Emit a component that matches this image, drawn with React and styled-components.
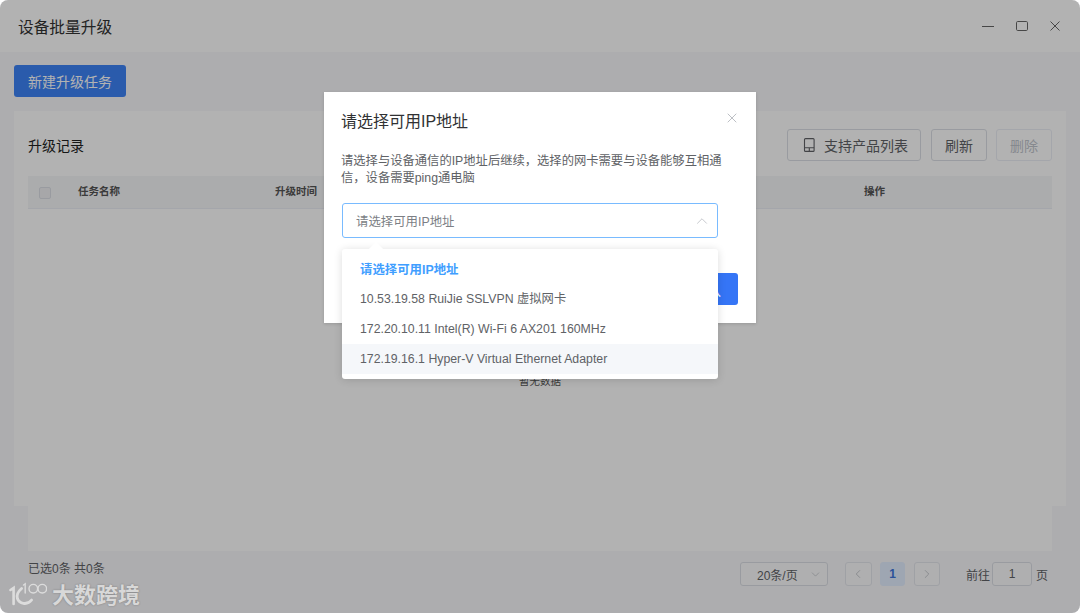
import React from 'react';
import styled, { createGlobalStyle } from 'styled-components';
import { X, ChevronUp, ChevronDown, ChevronLeft, ChevronRight } from 'lucide-react';

const Global = createGlobalStyle`
  html, body { margin: 0; padding: 0; background: #fff; }
  * { box-sizing: border-box; }
  body { font-family: "Liberation Sans", "Noto Sans CJK SC", sans-serif; color: #303133; }
`;

const Win = styled.div`
  position: relative;
  width: 1080px;
  height: 613px;
  overflow: hidden;
  border-radius: 8px;
  background: #f8f8fb;
  display: flex;
  flex-direction: column;
`;
const Header = styled.header`
  height: 52px;
  flex: none;
  background: #fff;
  display: flex;
  align-items: center;
  padding: 0 20px 0 18px;
`;
const WinTitle = styled.div`
  font-size: 15.7px;
  color: #333;
  flex: 1;
`;
const WinControls = styled.div`
  display: flex;
  align-items: center;
  gap: 22px;
  color: #666;
  margin-top: -1px;
`;
const Body = styled.main`
  flex: 1;
  padding: 13px 14px 0;
  display: flex;
  flex-direction: column;
  min-height: 0;
`;
const PrimaryBtn = styled.button`
  align-self: flex-start;
  width: 112px;
  height: 32px;
  border: 0;
  border-radius: 3px;
  background: #3d83f7;
  color: #fff;
  font: inherit;
  font-size: 14px;
  padding: 0;
`;
const Card = styled.section`
  margin-top: 14px;
  height: 395px;
  background: #fff;
  padding: 18px 14px 0;
`;
const Toolbar = styled.div`
  display: flex;
  align-items: center;
  height: 32px;
  gap: 9px;
`;
const CardTitle = styled.div`
  flex: 1;
  font-size: 14px;
  color: #222;
`;
const Btn = styled.button`
  height: 32px;
  width: ${p => p.$w}px;
  border: 1px solid ${p => (p.$disabled ? '#ebeef5' : '#dcdfe6')};
  border-radius: 3px;
  background: #fff;
  color: ${p => (p.$disabled ? '#c0c4cc' : '#606266')};
  font: inherit;
  font-size: 14px;
  padding: 0;
  display: inline-flex;
  align-items: center;
  justify-content: center;
`;
const IconBtn = styled(Btn)`
  justify-content: flex-start;
  padding-left: 15px;
  gap: 8px;
  margin-right: 1px;
`;
const TableArea = styled.div`
  margin-top: 15px;
  height: 375px;
  background: #ffffff;
  position: relative;
`;
const THead = styled.div`
  height: 33px;
  padding-bottom: 3px;
  background: #f5f6f8;
  border-bottom: 1px solid #ebeef5;
  display: grid;
  grid-template-columns: 50px 197px 589px 1fr;
  align-items: center;
  font-size: 10.5px;
  font-weight: 700;
  color: #555;
`;
const Check = styled.span`
  width: 12px;
  height: 12px;
  margin: 5px 0 0 11px;
  border: 1px solid #dcdfe6;
  background: #f0f0f2;
  border-radius: 2px;
  display: block;
`;
const Empty = styled.div`
  position: absolute;
  left: 0;
  right: 0;
  top: 197px;
  text-align: center;
  font-size: 10.5px;
  color: #555;
`;
const Footer = styled.footer`
  display: flex;
  align-items: center;
  height: 24px;
  position: absolute;
  left: 28px;
  right: 28px;
  top: 562px;
  font-size: 12px;
  color: #606266;
`;
const Selected = styled.div`
  flex: 1;
  margin-top: -14px;
`;
const PageSelect = styled.div`
  width: 88px;
  height: 24px;
  border: 1px solid #dcdfe6;
  border-radius: 3px;
  background: #fbfbfc;
  display: flex;
  align-items: center;
  justify-content: space-between;
  padding: 0 5px 0 16px;
  margin-right: 17px;
  color: #606266;
`;
const PageBtn = styled.div`
  height: 24px;
  width: ${p => p.$w}px;
  border: 1px solid ${p => (p.$active ? '#e3eeff' : '#e4e7ed')};
  border-radius: 3px;
  background: ${p => (p.$active ? '#e3eeff' : '#fbfbfc')};
  color: ${p => (p.$active ? '#3f76dc' : '#b0b4bb')};
  font-weight: 700;
  display: flex;
  align-items: center;
  justify-content: center;
  margin-right: ${p => p.$mr}px;
`;
const Goto = styled.span`
  margin-right: 2px;
`;
const GotoInput = styled.div`
  width: 40px;
  height: 24px;
  border: 1px solid #dcdfe6;
  border-radius: 3px;
  background: #fbfbfc;
  display: flex;
  align-items: center;
  justify-content: center;
  margin-right: 4px;
  color: #606266;
`;
const Unit = styled.span`
  margin-right: 4px;
`;

const Overlay = styled.div`
  position: absolute;
  inset: 0;
  background: rgba(0, 0, 0, 0.3);
`;
const Modal = styled.div`
  position: absolute;
  left: 324px;
  top: 92px;
  width: 432px;
  height: 231px;
  background: #fff;
  padding: 18px;
  box-shadow: 0 1px 3px rgba(0, 0, 0, 0.15);
`;
const ModalHead = styled.div`
  display: flex;
  align-items: center;
  justify-content: space-between;
  height: 20px;
  margin-left: -1px;
  color: #303133;
  font-size: 16px;
`;
const Close = styled.span`
  display: flex;
  color: #9a9ea6;
  margin-right: -2px;
  margin-top: -4px;
`;
const Desc = styled.p`
  margin: 23px 0 0 -1px;
  font-size: 12.3px;
  line-height: 17px;
  color: #606266;
  width: 385px;
`;
const Field = styled.div`
  position: relative;
  margin-top: 16px;
  width: 376px;
  height: 35px;
  border: 1px solid #79bbff;
  border-radius: 3px;
  display: flex;
  align-items: center;
  justify-content: space-between;
  padding: 0 6px 0 13px;
  font-size: 12.4px;
  color: #7c7f85;
`;
const Confirm = styled.button`
  position: absolute;
  right: 18px;
  top: 181px;
  width: 62px;
  height: 32px;
  border: 0;
  border-radius: 3px;
  background: #3575f6;
  color: #fff;
  font: inherit;
  font-size: 14px;
  padding: 0;
`;
const Dropdown = styled.div`
  position: absolute;
  left: 0;
  top: 45px;
  width: 376px;
  height: 130px;
  margin-left: -1px;
  background: #fff;
  border-radius: 3px;
  padding: 5px 0;
  box-shadow: 0 1px 8px rgba(0, 0, 0, 0.14);
  z-index: 2;
  &::before {
    content: '';
    position: absolute;
    left: 29px;
    top: -5px;
    width: 10px;
    height: 10px;
    background: #fff;
    transform: rotate(45deg);
  }
`;
const Option = styled.div`
  position: relative;
  height: 30px;
  line-height: ${p => (p.$group ? 32 : 31)}px;
  padding: 0 18px;
  font-size: ${p => (p.$group ? 12.4 : 12.3)}px;
  color: ${p => (p.$group ? '#409eff' : '#606266')};
  font-weight: ${p => (p.$group ? 700 : 400)};
  background: ${p => (p.$hover ? '#f5f7fa' : 'transparent')};
`;

const Watermark = styled.div`
  position: absolute;
  left: 9px;
  top: 578px;
  display: flex;
  align-items: center;
  gap: 5px;
  color: #d8d8d8;
  text-shadow: 0 0 2px rgba(0, 0, 0, 0.3);
`;
const WatermarkText = styled.span`
  font-size: 22px;
  font-weight: 700;
  line-height: 28px;
  margin-top: 4px;
`;

const Phone = () => (
  <svg width="13" height="14" viewBox="0 0 13 14" fill="none" stroke="currentColor" strokeWidth="1.1">
    <rect x="1.5" y="0.6" width="9.6" height="12.8" rx="1" />
    <path d="M1.5 9.8h9.6M6.3 9.8v3.6" />
  </svg>
);

const Logo = () => (
  <svg width="38" height="27" viewBox="0 0 38 27" fill="none" stroke="#dcdcdc" strokeLinecap="round">
    <path d="M1.5 9 4.6 7V23" strokeWidth="2.6" />
    <path d="M12.6 7.5C8.5 11 7.6 14.5 8.4 17.5 10 22.5 18 25 22.6 19" strokeWidth="2.8" />
    <path d="M14.5 4 16.2 2.8V12" strokeWidth="1.4" />
    <circle cx="24.3" cy="7.7" r="4.3" strokeWidth="1.4" />
    <circle cx="33.3" cy="7.7" r="4.3" strokeWidth="1.4" />
  </svg>
);

const MinimizeIcon = () => (
  <svg width="12" height="10" viewBox="0 0 12 10" stroke="currentColor" strokeWidth="1"><path d="M0 5.5h12" /></svg>
);
const MaximizeIcon = () => (
  <svg width="12" height="10" viewBox="0 0 12 10" fill="none" stroke="currentColor" strokeWidth="1"><rect x="0.5" y="0.5" width="11" height="9" rx="1.2" /></svg>
);
const CloseIcon = () => (
  <svg width="10" height="10" viewBox="0 0 10 10" stroke="currentColor" strokeWidth="1"><path d="M.5.5l9 9M9.5.5l-9 9" /></svg>
);

export default function App() {
  return (
    <>
      <Global />
      <Win>
        <Header>
          <WinTitle>设备批量升级</WinTitle>
          <WinControls>
            <MinimizeIcon />
            <MaximizeIcon />
            <CloseIcon />
          </WinControls>
        </Header>
        <Body>
          <PrimaryBtn>新建升级任务</PrimaryBtn>
          <Card>
            <Toolbar>
              <CardTitle>升级记录</CardTitle>
              <IconBtn $w={134}><Phone />支持产品列表</IconBtn>
              <Btn $w={56}>刷新</Btn>
              <Btn $w={56} $disabled>删除</Btn>
            </Toolbar>
            <TableArea>
              <THead>
                <span><Check /></span>
                <span>任务名称</span>
                <span>升级时间</span>
                <span>操作</span>
              </THead>
              <Empty>暂无数据</Empty>
            </TableArea>
          </Card>
        </Body>
        <Footer>
          <Selected>已选0条 共0条</Selected>
          <PageSelect>20条/页<ChevronDown size={13} strokeWidth={1} color="#a8abb2" /></PageSelect>
          <PageBtn $w={27} $mr={8}><ChevronLeft size={14} strokeWidth={1.2} /></PageBtn>
          <PageBtn $w={25} $mr={9} $active>1</PageBtn>
          <PageBtn $w={26} $mr={26}><ChevronRight size={14} strokeWidth={1.2} /></PageBtn>
          <Goto>前往</Goto>
          <GotoInput>1</GotoInput>
          <Unit>页</Unit>
        </Footer>
        <Overlay>
          <Modal>
            <ModalHead>
              请选择可用IP地址
              <Close><X size={16} strokeWidth={1} /></Close>
            </ModalHead>
            <Desc>请选择与设备通信的IP地址后继续，选择的网卡需要与设备能够互相通信，设备需要ping通电脑</Desc>
            <Field>
              请选择可用IP地址
              <ChevronUp size={18} strokeWidth={1} color="#b4b7bd" />
              <Dropdown>
                <Option $group>请选择可用IP地址</Option>
                <Option>10.53.19.58 RuiJie SSLVPN 虚拟网卡</Option>
                <Option>172.20.10.11 Intel(R) Wi-Fi 6 AX201 160MHz</Option>
                <Option $hover>172.19.16.1 Hyper-V Virtual Ethernet Adapter</Option>
              </Dropdown>
            </Field>
            <Confirm>确认</Confirm>
          </Modal>
        </Overlay>
        <Watermark>
          <Logo />
          <WatermarkText>大数跨境</WatermarkText>
        </Watermark>
      </Win>
    </>
  );
}
